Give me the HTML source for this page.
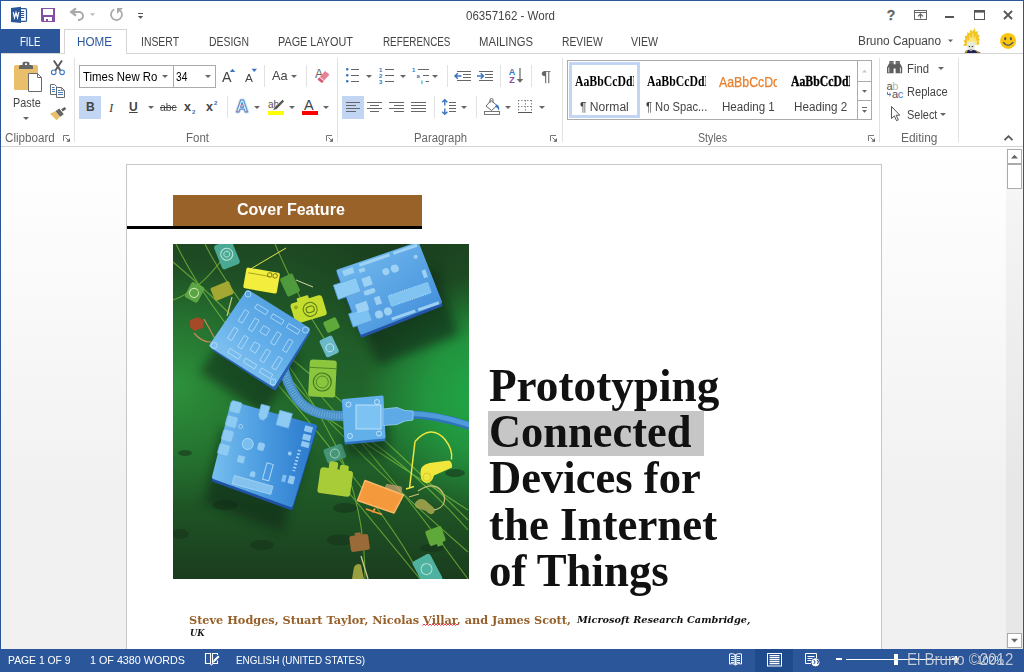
<!DOCTYPE html>
<html>
<head>
<meta charset="utf-8">
<title>06357162 - Word</title>
<style>
*{box-sizing:border-box;margin:0;padding:0}
html,body{width:1024px;height:672px;overflow:hidden;background:#fff}
body{font-family:"Liberation Sans",sans-serif;font-size:12px;color:#444;position:relative}
.abs{position:absolute}
#win{position:absolute;left:0;top:0;width:1024px;height:672px;overflow:hidden;background:#fff}
.t{position:absolute;white-space:nowrap;line-height:1;transform-origin:0 50%}
#title{top:10px;font-size:12px;color:#444}
#filetab{left:1px;top:29px;width:59px;height:24px;background:#2b579a}
#hometab{left:64px;top:29px;width:63px;height:25px;border:1px solid #d4d4d4;border-bottom:none;background:#fff;z-index:3}
#tabline{left:0;top:53px;width:1024px;height:1px;background:#d4d4d4}
.tab{top:36px;font-size:12px;color:#444}
#ribline{left:0;top:146px;width:1024px;height:1px;background:#d4d4d4}
.sep{position:absolute;top:58px;height:84px;width:1px;background:#e1e1e1}
.ssep{position:absolute;width:1px;height:22px;background:#e1e1e1}
.gl{position:absolute;top:132px;font-size:12px;color:#666;white-space:nowrap;line-height:1;transform-origin:0 50%}
.sel{position:absolute;background:#c2d5f2}
.rt{position:absolute;font-size:12.5px;color:#444;white-space:nowrap;line-height:1;transform-origin:0 50%}
.dd{position:absolute;width:0;height:0;border-left:3px solid transparent;border-right:3px solid transparent;border-top:3px solid #666}
#doc{left:1px;top:147px;width:1021px;height:502px;background:linear-gradient(#fff 0,#fdfdfd 60px,#f1f1f1 340px,#f1f1f1 100%)}
#page{left:126px;top:164px;width:756px;height:500px;background:#fff;border:1px solid #c6c6c6;border-bottom:none}
#status{left:0;top:649px;width:1024px;height:23px;background:#2b579a}
.st{position:absolute;top:655px;font-size:11.5px;color:#fff;white-space:nowrap;line-height:1;transform-origin:0 50%}
.hd{font-family:"Liberation Serif",serif;font-weight:bold;font-size:46px;color:#111}
#svgov{position:absolute;left:0;top:0;width:1024px;height:672px;z-index:5;pointer-events:none}
</style>
</head>
<body>
<div id="win">

<!-- TITLE BAR -->
<div class="t" id="title" style="left:466px;transform:scaleX(0.962);">06357162 - Word</div>

<!-- TABS -->
<div class="abs" id="tabline"></div>
<div class="abs" id="filetab"></div>
<div class="abs" id="hometab"></div>
<div class="t tab" style="left:20.3px;transform:scaleX(0.801);color:#fff;z-index:4">FILE</div>
<div class="t tab" style="left:77px;transform:scaleX(0.972);color:#2b579a;z-index:4">HOME</div>
<div class="t tab" style="left:141px;transform:scaleX(0.868);">INSERT</div>
<div class="t tab" style="left:208.6px;transform:scaleX(0.869);">DESIGN</div>
<div class="t tab" style="left:278px;transform:scaleX(0.904);">PAGE LAYOUT</div>
<div class="t tab" style="left:382.6px;transform:scaleX(0.822);">REFERENCES</div>
<div class="t tab" style="left:479px;transform:scaleX(0.941);">MAILINGS</div>
<div class="t tab" style="left:562px;transform:scaleX(0.858);">REVIEW</div>
<div class="t tab" style="left:631px;transform:scaleX(0.880);">VIEW</div>
<div class="t" style="left:858px;transform:scaleX(0.948);top:35px;font-size:12.5px;color:#444">Bruno Capuano</div>

<!-- RIBBON -->
<div class="abs" id="ribline"></div>
<!-- group separators -->
<div class="sep" style="left:74px"></div>
<div class="sep" style="left:337px"></div>
<div class="sep" style="left:562px"></div>
<div class="sep" style="left:879px"></div>
<div class="sep" style="left:958px"></div>
<!-- small separators -->
<div class="ssep" style="left:264px;top:65px"></div>
<div class="ssep" style="left:306px;top:65px"></div>
<div class="ssep" style="left:227px;top:96px"></div>
<div class="ssep" style="left:447px;top:65px"></div>
<div class="ssep" style="left:500px;top:65px"></div>
<div class="ssep" style="left:531px;top:65px"></div>
<div class="ssep" style="left:434px;top:96px"></div>
<div class="ssep" style="left:476px;top:96px"></div>
<!-- group labels -->
<div class="gl" style="left:4.5px;transform:scaleX(0.969);">Clipboard</div>
<div class="gl" style="left:186px;transform:scaleX(0.958);">Font</div>
<div class="gl" style="left:414px;transform:scaleX(0.946);">Paragraph</div>
<div class="gl" style="left:698px;transform:scaleX(0.887);">Styles</div>
<div class="gl" style="left:900.6px;transform:scaleX(0.992);">Editing</div>
<!-- clipboard -->
<div class="rt" style="left:12.6px;transform:scaleX(0.866);top:97px">Paste</div>
<div class="dd" style="left:23px;top:117px"></div>
<!-- font boxes -->
<div class="abs" style="left:79px;top:65px;width:95px;height:23px;border:1px solid #ababab;background:#fff"></div>
<div class="abs" style="left:173px;top:65px;width:43px;height:23px;border:1px solid #ababab;background:#fff"></div>
<div class="rt" style="left:82.6px;transform:scaleX(0.878);top:70px;font-size:13px;color:#000">Times New Ro</div>
<div class="dd" style="left:162px;top:75px"></div>
<div class="rt" style="left:175.9px;transform:scaleX(0.788);top:70px;font-size:13px;color:#000">34</div>
<div class="dd" style="left:205px;top:75px"></div>
<div class="rt" style="left:222px;transform:scaleX(1.017);top:70px;font-size:14px">A</div>
<div class="rt" style="left:244.8px;transform:scaleX(1.030);top:73px;font-size:11.5px">A</div>
<div class="rt" style="left:271.8px;transform:scaleX(0.981);top:69px;font-size:13px">Aa</div>
<div class="dd" style="left:291px;top:75px"></div>
<!-- font row 2 -->
<div class="sel" style="left:79px;top:96px;width:22px;height:23px"></div>
<div class="rt" style="left:86px;top:101px;font-size:12px;font-weight:bold">B</div>
<div class="rt" style="left:109px;top:100.500px;font-size:13px;font-style:italic;font-family:'Liberation Serif',serif">I</div>
<div class="rt" style="left:129px;top:101px;font-size:12px;font-weight:bold;text-decoration:underline">U</div>
<div class="dd" style="left:148px;top:106px"></div>
<div class="rt" style="left:159.6px;transform:scaleX(0.941);top:102px;font-size:11px;text-decoration:line-through">abc</div>
<div class="rt" style="left:184px;top:101px;font-size:12.5px;font-weight:bold">x</div>
<div class="rt" style="left:192px;top:109px;font-size:6px;font-weight:bold;color:#2e75b6">2</div>
<div class="rt" style="left:206px;top:101px;font-size:12.5px;font-weight:bold">x</div>
<div class="rt" style="left:214px;top:100px;font-size:6px;font-weight:bold;color:#2e75b6">2</div>
<div class="dd" style="left:254px;top:106px"></div>
<div class="dd" style="left:289px;top:106px"></div>
<div class="rt" style="left:304px;top:98px;font-size:14.5px">A</div>
<div class="abs" style="left:268px;top:111px;width:16px;height:4px;background:#ffff00"></div>
<div class="abs" style="left:302px;top:111px;width:16px;height:4px;background:#ff0000"></div>
<div class="dd" style="left:323px;top:106px"></div>
<!-- paragraph -->
<div class="dd" style="left:366px;top:75px"></div>
<div class="dd" style="left:400px;top:75px"></div>
<div class="dd" style="left:432px;top:75px"></div>
<div class="sel" style="left:342px;top:96px;width:22px;height:23px"></div>
<div class="dd" style="left:461px;top:106px"></div>
<div class="dd" style="left:505px;top:106px"></div>
<div class="dd" style="left:539px;top:106px"></div>
<div class="rt" style="left:541.2px;transform:scaleX(1.237);top:68px;font-size:15.500px;color:#666">¶</div>
<!-- styles gallery -->
<div class="abs" style="left:567px;top:60px;width:305px;height:60px;border:1px solid #ababab;background:#fff"></div>
<div class="abs" style="left:569px;top:62px;width:71px;height:56px;border:3px solid #c2d5f2;background:#fff"></div>
<div class="abs" style="left:857px;top:60px;width:15px;height:22px;border:1px solid #ababab;background:#fdfdfd"></div>
<div class="abs" style="left:857px;top:81px;width:15px;height:20px;border:1px solid #ababab;background:#fff"></div>
<div class="abs" style="left:857px;top:100px;width:15px;height:20px;border:1px solid #ababab;background:#fff"></div>
<div class="abs" style="left:575px;top:72px;width:58.6px;height:20px;overflow:hidden"><div class="rt" style="left:0px;transform:scaleX(0.858);top:3px;font-size:13.7px;font-weight:bold;color:#000;font-family:'Liberation Serif',serif">AaBbCcDdEe</div></div>
<div class="abs" style="left:647px;top:72px;width:58.6px;height:20px;overflow:hidden"><div class="rt" style="left:0px;transform:scaleX(0.858);top:3px;font-size:13.7px;font-weight:bold;color:#000;font-family:'Liberation Serif',serif">AaBbCcDdEe</div></div>
<div class="abs" style="left:718.75px;top:72px;width:58.6px;height:20px;overflow:hidden"><div class="rt" style="left:0px;transform:scaleX(0.880);top:3px;font-size:14px;color:#e8802f;-webkit-text-stroke:.25px #e8802f">AaBbCcDdEe</div></div>
<div class="abs" style="left:791px;top:72px;width:58.6px;height:20px;overflow:hidden"><div class="rt" style="left:0px;transform:scaleX(0.858);top:3px;font-size:13.7px;font-weight:bold;color:#000;font-family:'Liberation Serif',serif;-webkit-text-stroke:.3px #000">AaBbCcDdEe</div></div>
<div class="rt" style="left:579.5px;transform:scaleX(0.967);top:101px">¶ Normal</div>
<div class="rt" style="left:645.6px;transform:scaleX(0.894);top:101px">¶ No Spac...</div>
<div class="rt" style="left:721.9px;transform:scaleX(0.926);top:101px">Heading 1</div>
<div class="rt" style="left:793.75px;transform:scaleX(0.934);top:101px">Heading 2</div>
<!-- editing -->
<div class="rt" style="left:906.6px;transform:scaleX(0.904);top:62.500px">Find</div>
<div class="dd" style="left:938px;top:67px"></div>
<div class="rt" style="left:906.6px;transform:scaleX(0.885);top:86px">Replace</div>
<div class="rt" style="left:906.6px;transform:scaleX(0.875);top:109px">Select</div>
<div class="dd" style="left:940px;top:113px"></div>


<!-- DOCUMENT -->
<div class="abs" id="doc"></div>
<div class="abs" id="page"></div>
<div class="abs" style="left:173px;top:195px;width:249px;height:32px;background:#996228"></div>
<div class="abs" style="left:127px;top:226px;width:295px;height:2.500px;background:#000"></div>
<div class="t" style="left:236.6px;transform:scaleX(1.002);top:202px;font-size:16px;font-weight:bold;color:#fff">Cover Feature</div>
<svg class="abs" style="left:173px;top:244px;width:296px;height:335px" viewBox="173 244 296 335">
<defs>
<linearGradient id="bgv" x1="0" y1="0" x2="0" y2="1">
<stop offset="0" stop-color="#1e4822"/><stop offset=".25" stop-color="#205a28"/><stop offset=".5" stop-color="#22682c"/><stop offset=".75" stop-color="#1f5826"/><stop offset="1" stop-color="#1a3c1e"/>
</linearGradient>
<radialGradient id="bgr" cx="482" cy="395" r="120" gradientUnits="userSpaceOnUse">
<stop offset="0" stop-color="#21a746" stop-opacity="1"/><stop offset=".45" stop-color="#22a244" stop-opacity=".8"/><stop offset="1" stop-color="#22a244" stop-opacity="0"/>
</radialGradient>
<radialGradient id="bgl" cx="175" cy="385" r="120" gradientUnits="userSpaceOnUse">
<stop offset="0" stop-color="#2f9a3e" stop-opacity=".85"/><stop offset=".5" stop-color="#2c8f3a" stop-opacity=".5"/><stop offset="1" stop-color="#2c8f3a" stop-opacity="0"/>
</radialGradient>
<radialGradient id="bgd" cx="400" cy="250" r="110" gradientUnits="userSpaceOnUse">
<stop offset="0" stop-color="#183a1c" stop-opacity=".7"/><stop offset="1" stop-color="#183a1c" stop-opacity="0"/>
</radialGradient>
<linearGradient id="b1" x1="0" y1="1" x2="1" y2="0"><stop offset="0" stop-color="#92cef5"/><stop offset=".5" stop-color="#62aee9"/><stop offset="1" stop-color="#4896de"/></linearGradient>
<linearGradient id="b2" x1="0" y1="0" x2="1" y2="1"><stop offset="0" stop-color="#78bef0"/><stop offset=".6" stop-color="#559fe2"/><stop offset="1" stop-color="#3986d6"/></linearGradient>
<linearGradient id="b3" x1="0" y1="0" x2="1" y2="0"><stop offset="0" stop-color="#74bdee"/><stop offset=".5" stop-color="#4a9ae0"/><stop offset="1" stop-color="#2a78cc"/></linearGradient>
<filter id="sh" x="-30%" y="-30%" width="160%" height="160%"><feGaussianBlur stdDeviation="5"/></filter>
<filter id="sh2" x="-30%" y="-30%" width="160%" height="160%"><feGaussianBlur stdDeviation="2.500"/></filter>
<clipPath id="cv"><rect x="173" y="244" width="296" height="335"/></clipPath>
</defs>
<g clip-path="url(#cv)">
<rect x="173" y="244" width="296" height="335" fill="url(#bgv)"/>
<rect x="173" y="244" width="296" height="335" fill="url(#bgr)"/>
<rect x="173" y="244" width="296" height="335" fill="url(#bgd)"/>
<rect x="173" y="244" width="296" height="335" fill="url(#bgl)"/>
<!-- dark spots -->
<g fill="#16321a" opacity=".55">
<ellipse cx="225" cy="505" rx="13" ry="5"/><ellipse cx="340" cy="540" rx="13" ry="5.500"/><ellipse cx="180" cy="534" rx="9" ry="5"/><ellipse cx="262" cy="545" rx="12" ry="5"/><ellipse cx="185" cy="453" rx="7" ry="3"/><ellipse cx="345" cy="508" rx="12" ry="5"/><ellipse cx="432" cy="548" rx="12" ry="4"/><ellipse cx="455" cy="473" rx="10" ry="4"/>
</g>
<!-- light lines -->
<g fill="none" stroke="#8ed040" stroke-width="1.100" opacity=".62">
<path d="M176 244q30 60 75 110t100 120t70 105"/>
<path d="M173 262q60 50 120 120t175 170"/>
<path d="M205 244q20 40 60 90t70 110t30 135"/>
<path d="M173 300q30-10 60-56"/>
<path d="M255 330q80 60 213 190"/>
<path d="M300 400q90 60 168 110"/>
<path d="M320 395q80 90 148 184"/>
<path d="M275 244q30 70 60 110"/>
<path d="M330 470q50 60 90 109"/>
<path d="M355 430q60 40 113 100"/>
</g>
<!-- icons (flat) -->
<g stroke-linejoin="round">
<!-- teal phone top -->
<g transform="rotate(-22 227.500 256)"><rect x="218" y="241.500" width="19" height="26" rx="3" fill="#4fb2a0" opacity=".9"/><circle cx="227.500" cy="254" r="6" fill="none" stroke="#bfe8dc" stroke-width="1"/><circle cx="227.500" cy="254" r="3" fill="none" stroke="#bfe8dc" stroke-width=".8"/></g>
<!-- yellow radio -->
<path d="M248 270.500L286 248" stroke="#e6e04a" stroke-width="1"/>
<g transform="rotate(10 261 281)"><rect x="244.500" y="270" width="34" height="21" rx="2" fill="#f3ee3e"/><path d="M247 275h22" stroke="#a8a428" stroke-width="1"/><circle cx="268.500" cy="273.500" r="2.200" fill="none" stroke="#8a8820" stroke-width="1"/><circle cx="274" cy="273.500" r="2.200" fill="none" stroke="#8a8820" stroke-width="1"/></g>
<!-- green mp3 -->
<path d="M296 280L313 287" stroke="#d8d8a0" stroke-width="1"/>
<g transform="rotate(-25 290 285)"><rect x="283" y="275" width="14" height="20" rx="2" fill="#4f9a3c"/></g>
<!-- camera -->
<g transform="rotate(-17 308 309)"><rect x="292" y="299" width="33" height="21" rx="3" fill="#c4dd2e"/><rect x="300" y="295.500" width="12" height="5" rx="1" fill="#c4dd2e"/><circle cx="310" cy="310" r="7" fill="none" stroke="#5a7a1a" stroke-width="1"/><rect x="306" y="307" width="8" height="6" rx="2.500" fill="none" stroke="#5a7a1a" stroke-width="1"/><circle cx="297" cy="304" r="1.300" fill="none" stroke="#5a7a1a" stroke-width=".8"/></g>
<!-- left green ipod -->
<g transform="rotate(28 194.500 292)"><rect x="187.500" y="283.500" width="14.500" height="17.500" rx="2.500" fill="#62ac48" opacity=".9"/><circle cx="194.500" cy="293" r="4.500" fill="none" stroke="#cfe8b0" stroke-width="1"/></g>
<!-- olive box -->
<path d="M232 297L227 316" stroke="#c8c878" stroke-width="1.200"/>
<g transform="rotate(-22 222 291)"><rect x="212" y="284" width="20" height="14" rx="1.500" fill="#a4a832"/></g>
<!-- red vacuum -->
<path d="M204 319q10 18 12 22q-12 4-22-8" fill="none" stroke="#c08a5a" stroke-width="1.200"/>
<path d="M190 320l8-3 6 4-1 7-9 3-4-4z" fill="#a34a28"/>
<!-- washing machine -->
<g transform="rotate(3 322 378)"><rect x="309" y="360" width="27" height="37" rx="3" fill="#8cc63f"/><circle cx="322.500" cy="382" r="9" fill="none" stroke="#3f7a22" stroke-width="1.200"/><circle cx="322.500" cy="382" r="6" fill="none" stroke="#3f7a22" stroke-width=".8"/><path d="M309 368h27" stroke="#3f7a22" stroke-width=".8"/></g>
<!-- small green device -->
<g transform="rotate(-25 331.500 325)"><rect x="324.500" y="319" width="14" height="12" rx="2" fill="#5fa83a"/></g>
<!-- light blue ipod -->
<g transform="rotate(-25 329 346)"><rect x="322" y="337" width="14" height="19" rx="2.500" fill="#6ab8c8"/><circle cx="329" cy="348" r="4" fill="none" stroke="#cde8ee" stroke-width=".8"/></g>
<!-- teal small -->
<g transform="rotate(-20 335 454)"><rect x="325" y="446" width="20" height="15" rx="2.500" fill="#4a9a80" opacity=".9"/><circle cx="335" cy="453.500" r="4.500" fill="none" stroke="#a8d8c0" stroke-width=".8"/></g>
<!-- toaster -->
<g transform="rotate(8 335 480)"><rect x="319" y="469" width="33" height="26" rx="3" fill="#a8cc38"/><rect x="327" y="462" width="9" height="8" rx="2" fill="#a8cc38"/><rect x="338" y="464" width="9" height="6" rx="2" fill="#a8cc38"/></g>
<!-- faded box behind TV -->
<g transform="rotate(10 392 494)"><rect x="384" y="485" width="17" height="19" rx="2" fill="#c8a070" opacity=".75"/></g>
<!-- orange TV -->
<path d="M365 480.500L403.500 495 394 513 357.500 500.500z" fill="#f59a3c" stroke="#f8b868" stroke-width="1.500"/>
<path d="M375 508.500l-2.500 4M366 509l16 5.500" stroke="#f59a3c" stroke-width="1.800"/>
<!-- yellow vacuum -->
<path d="M415 441.500q16-18 30-2q8 10 6.500 20" fill="none" stroke="#efe63e" stroke-width="1.500"/>
<path d="M415 441.500l-5.500 47M406 489l8-2.500" fill="none" stroke="#efe63e" stroke-width="1.500"/>
<path d="M420.500 474q-1-9 9-11l19-2.500q4 1 3.500 7l-18 8q-2 7.500-7.500 7.500q-6-1-6-9z" fill="#f0e63c"/><circle cx="427" cy="477" r="4" fill="#f0e63c" stroke="#cfc52c" stroke-width=".8"/>
<!-- hairdryer outline -->
<path d="M409 497l10-3M418 491q18-12 26 4q3 12-10 15" fill="none" stroke="#c4bc70" stroke-width="1.300"/>
<path d="M415 503q4-6 10-3l9 8q2 4-2 6q-3 1-6-3l-9-3q-3-2-2-5z" fill="#a8a850" opacity=".85"/>
<!-- brown box -->
<g transform="rotate(-8 359.500 542.500)"><rect x="350" y="535" width="19" height="16" rx="2" fill="#9a6a38"/><rect x="356" y="532.500" width="6" height="3" fill="#9a6a38"/></g>
<!-- green device bottom right -->
<g transform="rotate(-20 435.500 536)"><rect x="427" y="528" width="17" height="16" rx="2" fill="#5fa83a"/><rect x="434" y="543" width="6" height="4" fill="#5fa83a"/></g>
<!-- teal phone bottom -->
<g transform="rotate(-28 427 570)"><rect x="417" y="556" width="20" height="30" rx="3" fill="#4fb2a0"/><circle cx="427" cy="569" r="5.500" fill="none" stroke="#bfe8dc" stroke-width=".9"/></g>
<!-- olive bottom -->
<path d="M361 556l7 23" stroke="#d0c890" stroke-width="1.300"/>
<path d="M352 579l2-12q3-5 7-2l3 14z" fill="#9aa040"/>
</g>

<!-- shadows -->
<g fill="#0e2612" opacity=".55" filter="url(#sh)">
<path d="M236 318L300 357 264 415 200 372z"/>
<path d="M350 298L436 268 458 334 378 366z"/>
<path d="M222 428L308 452 282 532 204 503z"/>
<path d="M346 415h42v40h-42z"/>
</g>
<!-- flat ribbon cable board1 -> ethernet -->
<path d="M283 366q4 18 14 32q12 18 46 18" fill="none" stroke="#4a90c8" stroke-width="10" stroke-linecap="butt"/>
<path d="M283 366q4 18 14 32q12 18 46 18" fill="none" stroke="#7ab8e0" stroke-width="6" stroke-linecap="butt" stroke-dasharray="1 1.500" opacity=".7"/>
<!-- round cable to right edge -->
<path d="M398 415q30-3 72 11" fill="none" stroke="#2f74b8" stroke-width="8"/>
<path d="M398 414q30-3 72 11" fill="none" stroke="#4f9ada" stroke-width="5"/>
<!-- board 1 -->
<g>
<path d="M248 295L307.500 332.500 274.500 387.500 213.500 348z" fill="#2860b0" stroke="#2860b0" stroke-width="5" stroke-linejoin="round"/>
<path d="M248 292.500L307.500 329.500 273 384 212 345.500z" fill="url(#b1)" stroke="url(#b1)" stroke-width="5" stroke-linejoin="round"/>
<g fill="none" stroke="#bfe0f8" stroke-width=".9" opacity=".85">
<circle cx="248" cy="294" r="3"/><circle cx="305.500" cy="330" r="3"/><circle cx="273" cy="382" r="3"/><circle cx="214" cy="345.500" r="3"/>
<g transform="translate(0 .5) rotate(31.500 260 338) translate(260 338) scale(.93) translate(-260 -338)">
<rect x="238" y="308" width="14" height="5"/><rect x="258" y="308" width="14" height="5"/><rect x="278" y="308" width="14" height="5"/>
<rect x="238" y="364" width="14" height="5"/><rect x="258" y="364" width="14" height="5"/><rect x="278" y="364" width="14" height="5"/>
<rect x="230" y="320" width="5" height="14"/><rect x="230" y="342" width="5" height="14"/>
<rect x="244" y="322" width="5" height="14"/><rect x="244" y="344" width="5" height="14"/>
<rect x="272" y="322" width="5" height="14"/><rect x="272" y="344" width="5" height="14"/>
<rect x="287" y="322" width="5" height="14"/><rect x="287" y="344" width="5" height="14"/>
<rect x="256" y="324" width="8" height="8"/><rect x="257" y="344" width="7" height="10"/>
</g>
</g>
</g>
<!-- arduino -->
<g>
<path d="M338 273.500L418 246 441 305 362 336z" fill="#2455a8" stroke="#2455a8" stroke-width="3" stroke-linejoin="round"/>
<path d="M338 271L417.500 243.500 440.500 302 361.500 333z" fill="url(#b2)" stroke="url(#b2)" stroke-width="3" stroke-linejoin="round"/>
<g transform="translate(338 271) rotate(-19.100)">
<rect x="-9" y="12" width="24" height="15" fill="#8cccf4" stroke="#5ea6e2" stroke-width=".8"/>
<rect x="-4" y="44" width="20" height="14" fill="#7cc2f2" stroke="#5aa4e0" stroke-width=".8"/>
<g fill="#a4d6f6" opacity=".9">
<rect x="22" y="0" width="32" height="3"/><rect x="58" y="0" width="25" height="3"/>
<rect x="35" y="61.500" width="25" height="3"/><rect x="63" y="61.500" width="22" height="3"/>
<rect x="38.500" y="40" width="43" height="11" fill="#86c8f2"/>
<rect x="19.500" y="15" width="9" height="9"/><rect x="17" y="27.500" width="12" height="5" rx="2.500"/>
<rect x="5" y="37.500" width="12" height="9"/><rect x="25" y="37" width="6" height="8"/>
<circle cx="45" cy="16.300" r="3.500"/><circle cx="54.500" cy="16.300" r="4"/>
<circle cx="24.500" cy="54.500" r="4"/><circle cx="34" cy="54.500" r="4"/>
<rect x="4" y="1" width="11" height="6"/><rect x="20" y="5" width="6" height="4"/>
<rect x="79" y="27" width="4" height="8"/><circle cx="78" cy="12" r="2"/>
</g>
<g stroke="#d6ecfa" stroke-width=".8" stroke-dasharray="1 1.300" opacity=".9"><path d="M40 40h40M40 51h40"/></g>
</g>
</g>
<!-- board 3 -->
<g>
<path d="M232.500 406L315 429 291 508 214 480z" fill="#1f52a4" stroke="#1f52a4" stroke-width="4" stroke-linejoin="round"/>
<path d="M232.500 403.500L315 426.500 291 505 214 477z" fill="url(#b3)" stroke="url(#b3)" stroke-width="4" stroke-linejoin="round"/>
<g transform="translate(232.500 403.500) rotate(15.400)" fill="#9ad0f4">
<g stroke="#6ab0e6" stroke-width=".7" fill="#8ecbf3">
<rect x="-1.500" y="-3" width="11" height="11.500" rx="2"/><rect x="-1.500" y="12" width="11" height="11.500" rx="2"/><rect x="-1.500" y="26.500" width="11" height="11.500" rx="2"/><rect x="-1.500" y="41" width="11" height="11.500" rx="2"/>
<path d="M28 -7h9v11l-2.500 4h-4l-2.500-4z"/><rect x="47.500" y="-6" width="13" height="15"/>
</g>
<g opacity=".9">
<circle cx="25.400" cy="35" r="5.500" fill="#7cc2f0" stroke="#b6defa" stroke-width=".9"/>
<rect x="35.500" y="30" width="7" height="8" rx="2.500"/><rect x="19.500" y="48" width="7" height="7"/>
<path d="M35.500 65.500v-3a2.700 2.700 0 0 1 5.400 0v3z"/>
<rect x="49" y="48" width="6.500" height="17" fill="none" stroke="#b6defa" stroke-width="1"/>
<rect x="21" y="69" width="40" height="8.500" fill="#8ac6f0" stroke="#b6defa" stroke-width=".7"/>
<rect x="76" y="1.500" width="8" height="6"/><rect x="76.500" y="10" width="8" height="6"/><rect x="77" y="17.500" width="8" height="5.500"/>
<path d="M77 27v22" stroke="#b6defa" stroke-width="3" stroke-dasharray="1.500 2" fill="none"/>
<rect x="74" y="54" width="6" height="8"/><rect x="67.500" y="55" width="4" height="7" opacity=".8"/>
<circle cx="68.500" cy="33" r="2"/><circle cx="14" cy="20" r="2" fill="none" stroke="#b6defa" stroke-width=".8"/>
</g>
</g>
</g>
<!-- ethernet module -->
<g>
<path d="M343.500 402.500L382 399 384 439.500 346 443z" fill="#2f74c4" stroke="#2f74c4" stroke-width="3" stroke-linejoin="round"/>
<path d="M343.500 400.500L382 397 384 437 346 440.500z" fill="#62b0ea" stroke="#62b0ea" stroke-width="3" stroke-linejoin="round"/>
<rect x="356" y="405" width="25" height="24" fill="#7cc2f2" stroke="#d6ecfa" stroke-width=".8"/>
<g fill="none" stroke="#d6ecfa" stroke-width=".8"><circle cx="348.500" cy="404.500" r="2.500"/><circle cx="377" cy="402" r="2.500"/><circle cx="350" cy="436" r="2.500"/><circle cx="379" cy="433.500" r="2.500"/></g>
<path d="M383 409l14-1.500 8 3 8 .5v9l-8 1-8 3.500-14 1z" fill="#5eaae6" stroke="#9ad0f4" stroke-width=".8"/>
</g>

</g>
</svg>

<!-- title -->
<div class="abs" style="left:488px;top:411px;width:216px;height:45px;background:#c6c6c6"></div>
<div class="t hd" style="left:489.1px;transform:scaleX(0.983);top:362.600px">Prototyping</div>
<div class="t hd" style="left:489px;transform:scaleX(0.966);top:409px">Connected</div>
<div class="t hd" style="left:488.6px;transform:scaleX(0.970);top:455.400px">Devices for</div>
<div class="t hd" style="left:488.6px;transform:scaleX(0.976);top:501.800px">the Internet</div>
<div class="t hd" style="left:488.6px;transform:scaleX(0.974);top:548.200px">of Things</div>
<!-- authors -->
<div class="t" style="left:189.4px;transform:scaleX(1.110);top:614.500px;font-family:'DejaVu Serif Condensed','DejaVu Serif',serif;font-weight:bold;font-size:11.300px;color:#96602b">Steve Hodges, Stuart Taylor, Nicolas Villar, and James Scott,</div>
<div class="t" style="left:576.6px;transform:scaleX(1.084);top:615.300px;font-family:'DejaVu Serif Condensed','DejaVu Serif',serif;font-weight:bold;font-style:italic;font-size:10px;color:#111">Microsoft Research Cambridge,</div>
<div class="t" style="left:190.3px;transform:scaleX(1.008);top:628px;font-family:'DejaVu Serif Condensed','DejaVu Serif',serif;font-weight:bold;font-style:italic;font-size:9.300px;color:#111">UK</div>


<!-- SCROLLBAR -->
<div class="abs" style="left:1006px;top:147px;width:17px;height:502px;background:linear-gradient(#fbfbfb 0,#f4f4f4 60px,#e7e7e7 340px,#e7e7e7 100%)"></div>
<div class="abs" style="left:1007px;top:149px;width:15px;height:15px;border:1px solid #ababab;background:#fff"></div>
<div class="abs" style="left:1007px;top:164px;width:15px;height:25px;border:1px solid #ababab;background:#fff"></div>
<div class="abs" style="left:1007px;top:633px;width:15px;height:15px;border:1px solid #ababab;background:#fff"></div>


<!-- STATUS BAR -->
<div class="abs" id="status"></div>
<div class="abs" style="left:755px;top:649px;width:38px;height:23px;background:#1f4a8c"></div>
<div class="st" style="left:8.4px;transform:scaleX(0.901);">PAGE 1 OF 9</div>
<div class="st" style="left:90px;transform:scaleX(0.935);">1 OF 4380 WORDS</div>
<div class="st" style="left:236px;transform:scaleX(0.858);">ENGLISH (UNITED STATES)</div>
<div class="abs" style="left:846px;top:659px;width:111px;height:1px;background:#fff"></div>
<div class="abs" style="left:836px;top:658px;width:6px;height:2px;background:#fff"></div>
<div class="abs" style="left:894px;top:653.500px;width:4px;height:11.500px;background:#fff"></div>
<div class="abs" style="left:952px;top:658px;width:7px;height:2px;background:#fff"></div>
<div class="abs" style="left:954.500px;top:655.500px;width:2px;height:7px;background:#fff"></div>
<div class="st" style="left:977px;transform:scaleX(0.918);top:655px;font-size:11.500px;opacity:.9">102%</div>
<div class="st" style="left:906.7px;transform:scaleX(0.939);top:651.500px;font-size:16px;color:#dfe6f1;opacity:.82;text-shadow:0 0 1px rgba(0,0,0,.7)">El Bruno ©2012</div>


<!-- ICON OVERLAY -->
<svg id="svgov" viewBox="0 0 1024 672">
<!-- Word icon -->
<g>
<rect x="19.500" y="8.600" width="7" height="12.800" rx="1" fill="#fff" stroke="#2b579a" stroke-width="1.200"/>
<path d="M21 11.500h3.200M21 13.500h3.200M21 15.500h3.200M21 17.500h3.200" stroke="#2b579a" stroke-width="1"/>
<path d="M11 8L21 6.800v16.200L11 22z" fill="#2b579a"/>
<path d="M13.200 12.200l1.300 5.400 1.500-5 1.500 5 1.300-5.400" fill="none" stroke="#fff" stroke-width="1.250" stroke-linejoin="miter"/>
</g>
<!-- Save icon -->
<g>
<path d="M41 8h14v14H42l-1-1z" fill="#8350a6"/>
<rect x="43" y="9" width="10" height="6" fill="#fff"/>
<rect x="44" y="17" width="8" height="4" fill="#fff"/>
<rect x="46" y="19" width="2" height="2" fill="#8350a6"/>
</g>
<!-- Undo -->
<g fill="none" stroke="#a9a9ab" stroke-linecap="butt" stroke-linejoin="miter">
<path d="M71.500 12H79A4 4 0 0 1 83 16Q83 19.500 78 20.200" stroke-width="1.900"/>
<path d="M76 8.400L71.300 12l4.700 3.600" stroke-width="2.400"/>
</g>
<path d="M90 13.200h5l-2.500 2.800z" fill="#b9b9b9"/>
<!-- Redo -->
<g>
<path d="M120.300 10.600A5.500 5.500 0 1 1 114.300 9.500" fill="none" stroke="#a9a9ab" stroke-width="1.800"/>
<path d="M117 8h6l-6 6z" fill="#a9a9ab"/>
</g>
<!-- QAT customize -->
<path d="M138 13.5h5" stroke="#555" stroke-width="1"/>
<path d="M137.8 16h5.4l-2.7 2.7z" fill="#555"/>

<!-- Title controls -->
<text x="886.800" y="20" font-family="Liberation Sans" font-weight="bold" font-size="14" fill="#666" stroke="#666" stroke-width=".3">?</text>
<g fill="none" stroke="#666" stroke-width="1">
<rect x="914.5" y="10.5" width="12" height="9"/>
<path d="M914.5 12.5h12"/>
<path d="M920.500 18.500v-4.500M918 16.300l2.500-2.500 2.500 2.500" stroke-width="1.200"/>
</g>
<rect x="945" y="16" width="9" height="2" fill="#555"/>
<rect x="974.500" y="10.5" width="10" height="9" fill="none" stroke="#555"/>
<rect x="974" y="10" width="11" height="2.6" fill="#555"/>
<path d="M1004 11l8 8M1012 11l-8 8" stroke="#555" stroke-width="1.8"/>

<!-- user dropdown -->
<path d="M948 39.500h5l-2.500 2.800z" fill="#666"/>
<!-- avatar -->
<g>
<path d="M963 46l2-3-1.500-2 2-2-1-3 2.500-.5.500-3.500 2 1.500 1-4 2 2 2.500-3.500.500 4 2.500-1-.5 3.500 2.500 1-1.500 2 1.500 2.500-1.500 1 1 3-2.500 1z" fill="#f0c526"/>
<path d="M966.500 44l1-5 1.500 2 .8-6 1.700 4 1.500-7 .8 7 1.800-3 .2 5 1.500-1-.5 5z" fill="#fbe77e"/>
<path d="M967 43.500q.2-1.800 1.800-1.800h4.400q1.700 0 1.700 1.800v4.500l-2.500 3.700h-3l-2.400-3.700z" fill="#e7ebe0"/>
<path d="M968.700 46.300l1.500.5M973.200 46.300l-1.500.5" stroke="#333" stroke-width="1"/>
<path d="M970.200 49.700h1.600" stroke="#555" stroke-width=".8"/>
<path d="M964.500 53l1.500-2.200 3-1 2 1.500 2-1.500 3 .8 5 2.400z" fill="#1e2452"/>
<path d="M964.500 52.500l2.200-2 1.300.3-1.800 2.200zM975.500 50.500l2.500.5 1.500 1.500-2 .2z" fill="#c9a52a"/>
</g>
<!-- smiley -->
<g>
<circle cx="1008.100" cy="40.900" r="8" fill="#fdc60e"/>
<ellipse cx="1005.200" cy="38.700" rx="1.100" ry="1.600" fill="#4f5868"/>
<ellipse cx="1010.900" cy="38.700" rx="1.100" ry="1.600" fill="#4f5868"/>
<path d="M1003.400 42.500q4.700 5.800 9.400 0" fill="none" stroke="#4f5868" stroke-width="1.400" stroke-linecap="round"/>
</g>

<!-- ===== CLIPBOARD ===== -->
<!-- Paste -->
<g>
<rect x="14" y="65" width="24" height="25" rx="1.500" fill="#eabf6c"/>
<path d="M19 69v-2.500q0-1.500 1.500-1.500h2v-1.500q0-1.700 1.700-1.700h3.600q1.700 0 1.700 1.700V65h2q1.500 0 1.500 1.500V69z" fill="#666"/>
<rect x="25" y="63.300" width="2" height="1.700" fill="#fff"/>
<path d="M28.500 73.500h9l4 4v14h-13z" fill="#fff" stroke="#6a6a6a" stroke-width="1"/>
<path d="M37.500 73.500v4h4" fill="none" stroke="#6a6a6a" stroke-width="1"/>
</g>
<!-- Cut -->
<g fill="none">
<path d="M53.800 60.500l6.800 10.300M62 60.500l-6.800 10.300" stroke="#595959" stroke-width="1.900"/>
<circle cx="53.700" cy="72.300" r="2.300" stroke="#3f7cc4" stroke-width="1.100"/>
<circle cx="62.100" cy="72.300" r="2.300" stroke="#3f7cc4" stroke-width="1.100"/>
</g>
<!-- Copy -->
<g>
<path d="M50.500 84.500h4l2 2v8h-6z" fill="#fff" stroke="#6a6a6a" stroke-width="1"/>
<path d="M52 87.500h2.500M52 89.500h3M52 91.500h3" stroke="#3f7cc4" stroke-width="1"/>
<path d="M56.500 87.500h5l3 3v7h-8z" fill="#fff" stroke="#6a6a6a" stroke-width="1"/>
<path d="M61.500 87.500v3h3" fill="none" stroke="#6a6a6a" stroke-width=".8"/>
<path d="M58 90.500h2.500M58 92.500h5M58 94.500h5" stroke="#3f7cc4" stroke-width="1"/>
</g>
<!-- Format painter -->
<g>
<path d="M50 113.700l5.600-2.700 4.600 5.700-3.600 3.600z" fill="#eabf6c"/>
<path d="M55.600 111l3.600-2.400 4.500 5.600-3.500 2.500z" fill="#5e5e5e"/>
<path d="M57.200 110l4.500 5.600" stroke="#8a8a8a" stroke-width=".7"/>
<path d="M61.200 109.300l3.500-2.300 1.500 2-3.500 2.500z" fill="#5e5e5e"/>
</g>
<!-- launchers -->
<g>
<path d="M69 135.500h-5.500v5.500" fill="none" stroke="#777" stroke-width="1"/><path d="M65.5 137.500l3 3" fill="none" stroke="#777" stroke-width="1"/><path d="M70 138v3.700h-3.700z" fill="#666"/>
<path d="M332 135.500h-5.500v5.500" fill="none" stroke="#777" stroke-width="1"/><path d="M328.5 137.500l3 3" fill="none" stroke="#777" stroke-width="1"/><path d="M333 138v3.700h-3.700z" fill="#666"/>
<path d="M556 135.500h-5.500v5.500" fill="none" stroke="#777" stroke-width="1"/><path d="M552.5 137.500l3 3" fill="none" stroke="#777" stroke-width="1"/><path d="M557 138v3.700h-3.700z" fill="#666"/>
<path d="M874 135.500h-5.500v5.500" fill="none" stroke="#777" stroke-width="1"/><path d="M870.5 137.500l3 3" fill="none" stroke="#777" stroke-width="1"/><path d="M875 138v3.700h-3.700z" fill="#666"/>
</g>

<!-- ===== FONT ===== -->
<!-- grow/shrink arrows -->
<path d="M229.800 72l2.700-3.200 2.700 3.200z" fill="#3a76bd"/>
<path d="M251.600 68.800h5.400l-2.700 3.200z" fill="#3a76bd"/>
<!-- clear formatting -->
<g>
<text x="315" y="77.500" font-family="Liberation Sans" font-size="12" fill="#666">A</text>
<path d="M317.500 79.500l7.500-8.500 4.500 3.500-7.500 8.500z" fill="#e58496"/>
<path d="M317.500 79.500l1.500-1.700 4.500 3.500-1.500 1.700z" fill="#d75d74"/>
<path d="M319.600 77.200l4.500 3.500" stroke="#fff" stroke-width=".8"/>
</g>
<!-- text effects A -->
<g>
<text x="236" y="112.300" font-family="Liberation Sans" font-weight="bold" font-size="16.500" fill="#fff" stroke="#d9e6f6" stroke-width="3" stroke-linejoin="round">A</text>
<text x="236" y="112.300" font-family="Liberation Sans" font-weight="bold" font-size="16.500" fill="#fff" stroke="#3f7cc4" stroke-width=".9" stroke-linejoin="round">A</text>
</g>
<!-- highlight -->
<g>
<text x="268" y="108" font-family="Liberation Sans" font-size="10" fill="#555">ab</text>
<path d="M272.500 110.500l2-3.500 8-7.500 1.800 1.800-7.500 8z" fill="#555" stroke="#fff" stroke-width=".6"/>
</g>

<!-- ===== PARAGRAPH ===== -->
<!-- bullets -->
<g>
<rect x="346" y="68" width="2.500" height="2.500" rx="1" fill="#3a76bd"/><rect x="346" y="74" width="2.500" height="2.500" rx="1" fill="#3a76bd"/><rect x="346" y="80" width="2.500" height="2.500" rx="1" fill="#3a76bd"/>
<path d="M351 69.500h8M351 75.500h8M351 81.500h8" stroke="#666" stroke-width="1"/>
</g>
<!-- numbering -->
<g>
<text x="379" y="72" font-family="Liberation Sans" font-weight="bold" font-size="6" fill="#3a76bd">1</text>
<text x="379" y="78" font-family="Liberation Sans" font-weight="bold" font-size="6" fill="#3a76bd">2</text>
<text x="379" y="84" font-family="Liberation Sans" font-weight="bold" font-size="6" fill="#3a76bd">3</text>
<path d="M385 69.500h9M385 75.500h9M385 81.500h9" stroke="#666" stroke-width="1"/>
</g>
<!-- multilevel -->
<g>
<text x="412" y="72" font-family="Liberation Sans" font-weight="bold" font-size="6" fill="#3a76bd">1</text>
<text x="416.500" y="78" font-family="Liberation Sans" font-weight="bold" font-size="6" fill="#3a76bd">a</text>
<text x="421" y="84" font-family="Liberation Sans" font-weight="bold" font-size="6" fill="#3a76bd">i</text>
<path d="M418 69.500h11M423 75.500h6M425.500 81.500h3.500" stroke="#666" stroke-width="1"/>
</g>
<!-- decrease indent -->
<g>
<path d="M457 71.500h14M463 74.500h8M463 77.500h8M457 80.500h14" stroke="#666" stroke-width="1"/>
<path d="M455 76h6.500M457.800 73.200L455 76l2.800 2.800" fill="none" stroke="#3a76bd" stroke-width="1.500"/>
</g>
<!-- increase indent -->
<g>
<path d="M479 71.500h14M485 74.500h8M485 77.500h8M479 80.500h14" stroke="#666" stroke-width="1"/>
<path d="M477 76h6.500M480.700 73.200l2.800 2.800-2.800 2.800" fill="none" stroke="#3a76bd" stroke-width="1.500"/>
</g>
<!-- sort -->
<g>
<text x="508.800" y="74.500" font-family="Liberation Sans" font-weight="bold" font-size="9" fill="#3a76bd">A</text>
<text x="509.200" y="82.800" font-family="Liberation Sans" font-weight="bold" font-size="9" fill="#8a4aa8">Z</text>
<path d="M520 68v14" stroke="#666" stroke-width="1.200"/>
<path d="M516.800 79h6.400l-3.200 3.800z" fill="#666"/>
</g>
<!-- align left/center/right/justify -->
<g stroke="#666" stroke-width="1">
<path d="M346 102.500h14M346 105.500h10M346 108.500h14M346 111.500h10"/>
<path d="M367 102.500h15M370 105.500h9M367 108.500h15M370 111.500h9"/>
<path d="M389 102.500h15M394 105.500h10M389 108.500h15M394 111.500h10"/>
<path d="M411 102.500h15M411 105.500h15M411 108.500h15M411 111.500h15"/>
</g>
<!-- line spacing -->
<g>
<path d="M449 102.500h7M449 105.500h7M449 108.500h7M449 111.500h7" stroke="#666" stroke-width="1"/>
<path d="M444.800 99.700v5.800M444.800 108.500v5.800M442.200 102.300l2.600-2.600 2.600 2.600M442.200 111.700l2.600 2.600 2.600-2.600" fill="none" stroke="#3a76bd" stroke-width="1.400"/>
</g>
<!-- shading -->
<g>
<rect x="484.500" y="111.500" width="15" height="3" fill="#fff" stroke="#777" stroke-width="1"/>
<path d="M491 100.500l6 5-5.500 5-5.500-4.500z" fill="#fff" stroke="#666" stroke-width="1"/>
<path d="M490 103v-3a1.500 1.500 0 0 1 3 0v2.500" fill="none" stroke="#666" stroke-width="1"/>
<path d="M496.500 104.500q3.500 1 2.500 6.200q-1.200-3.200-4-4.200z" fill="#3a76bd"/>
</g>
<!-- borders -->
<g stroke="#888" stroke-width="1" stroke-dasharray="1.500 1.500">
<path d="M518 100.500h14M518 106.500h14"/>
<path d="M518.500 100v12M525.500 100v12M531.500 100v12"/>
</g>
<path d="M518 112.500h14" stroke="#555" stroke-width="1"/>

<!-- ===== STYLES scroll ===== -->
<path d="M862 72.500h5l-2.500-2.800z" fill="#c8c8c8"/>
<path d="M862 90h5l-2.500 2.800z" fill="#666"/>
<path d="M862 107.500h5" stroke="#666" stroke-width="1"/>
<path d="M862 110h5l-2.500 2.800z" fill="#666"/>

<!-- ===== EDITING ===== -->
<!-- binoculars -->
<g fill="#5e5e5e">
<path d="M887 73.200v-6l2.400-4.200v-2h4.200v12.200z"/>
<path d="M902.200 73.200v-6l-2.400-4.200v-2h-4.200v12.200z"/>
<rect x="893" y="64.300" width="3.200" height="4.200"/>
</g>
<path d="M888.800 67.500v5M900.400 67.500v5" stroke="#e4e4e4" stroke-width="1"/>
<path d="M889.600 62.800h3.800M895.800 62.800h3.800" stroke="#9a9a9a" stroke-width=".7"/>
<!-- replace -->
<g font-family="Liberation Sans" font-size="11">
<text x="886.600" y="90" fill="#555">a</text>
<text x="892.300" y="90" fill="#b4b4b4">b</text>
<text x="892" y="97.600" fill="#555">a</text>
<text x="897.800" y="97.600" fill="#3f7cc4">c</text>
</g>
<path d="M887.500 92v2.500h3M889.300 93l1.600 1.500-1.600 1.500" fill="none" stroke="#3f7cc4" stroke-width="1"/>
<!-- select cursor -->
<path d="M891.500 106.500v12l2.800-2.600 2.200 4.800 1.800-.8-2.200-4.700h3.700z" fill="#fff" stroke="#555" stroke-width="1" stroke-linejoin="round"/>
<!-- collapse ribbon -->
<path d="M1004.500 140.200l4-4 4 4" fill="none" stroke="#555" stroke-width="1.800"/>

<!-- ===== SCROLLBAR arrows ===== -->
<path d="M1011 158.500h7l-3.500-3.800z" fill="#666"/>
<path d="M1011 638.800h7l-3.500 3.800z" fill="#666"/>

<!-- ===== wavy underline ===== -->
<path d="M422.500 625.500l1.500-1.500 1.500 1.500 1.500-1.500 1.500 1.500 1.500-1.500 1.500 1.500 1.500-1.500 1.500 1.500 1.500-1.500 1.500 1.500 1.500-1.500 1.500 1.500 1.500-1.500 1.500 1.500 1.500-1.500 1.500 1.500 1.500-1.500 1.500 1.500 1.500-1.500 1.500 1.500 1.500-1.500 1.500 1.500 1.500-1.500" fill="none" stroke="#e8202a" stroke-width=".9"/>

<!-- ===== STATUS icons ===== -->
<!-- proofing -->
<g fill="none" stroke="#fff" stroke-width="1.100">
<path d="M205.500 653.500h5v10h-5z"/>
<path d="M212.500 663.500v-10h5v1.500M217.500 660.500v3h-5"/>
<path d="M210.300 663.800l1.200 1.500 1.200-1.500" stroke-width="1"/>
<path d="M218.800 656.200l-4.600 4.600" stroke-width="2.200"/>
<path d="M213.800 660.400l-.8 1.800 1.800-.8" stroke-width=".8" fill="#fff"/>
</g>
<!-- read mode -->
<g fill="none" stroke="#fff" stroke-width="1">
<path d="M729.500 654q3-1 5.500.5v10q-2.500-1.500-5.500-.5zM741.500 654q-3-1-5.500.5v10q2.500-1.500 5.500-.5z"/>
<path d="M731 656.500h3M731 658.500h3M731 660.500h3M731 662.500h3M737 656.500h3M737 658.500h3M737 660.500h3M737 662.500h3" stroke-width=".9"/>
<path d="M735.500 654.500v11" stroke-width="1.200" stroke-dasharray="1.200 .8"/>
</g>
<!-- print layout -->
<g fill="none" stroke="#fff" stroke-width="1">
<rect x="767.500" y="653.500" width="14" height="12.500"/>
<path d="M769.500 655.600h10M769.500 657.600h10M769.500 659.600h10M769.500 661.600h10M769.500 663.600h10" stroke-width="1.100"/>
</g>
<!-- web layout -->
<g fill="none" stroke="#fff" stroke-width="1">
<path d="M811 663.500h-5.500v-10h11v4.500"/>
<path d="M807.500 656.500h7M807.500 658.500h5M807.500 660.500h4"/>
<circle cx="815.500" cy="662.300" r="3.600" fill="#fff" stroke="#fff"/>
<path d="M813.500 660.500q1.500 0 1.500 1.500t-1.500 1.500M817 660l1.500 1.500-1 2.500" stroke="#2b579a" stroke-width="1.100"/>
</g>

</svg>

<!-- WINDOW BORDER -->
<div class="abs" style="left:0;top:0;width:1024px;height:1px;background:#2b579a;z-index:9"></div>
<div class="abs" style="left:0;top:0;width:1px;height:672px;background:#2b579a;z-index:9"></div>
<div class="abs" style="left:1023px;top:0;width:1px;height:672px;background:#2b579a;z-index:9"></div>

</div>
</body>
</html>
